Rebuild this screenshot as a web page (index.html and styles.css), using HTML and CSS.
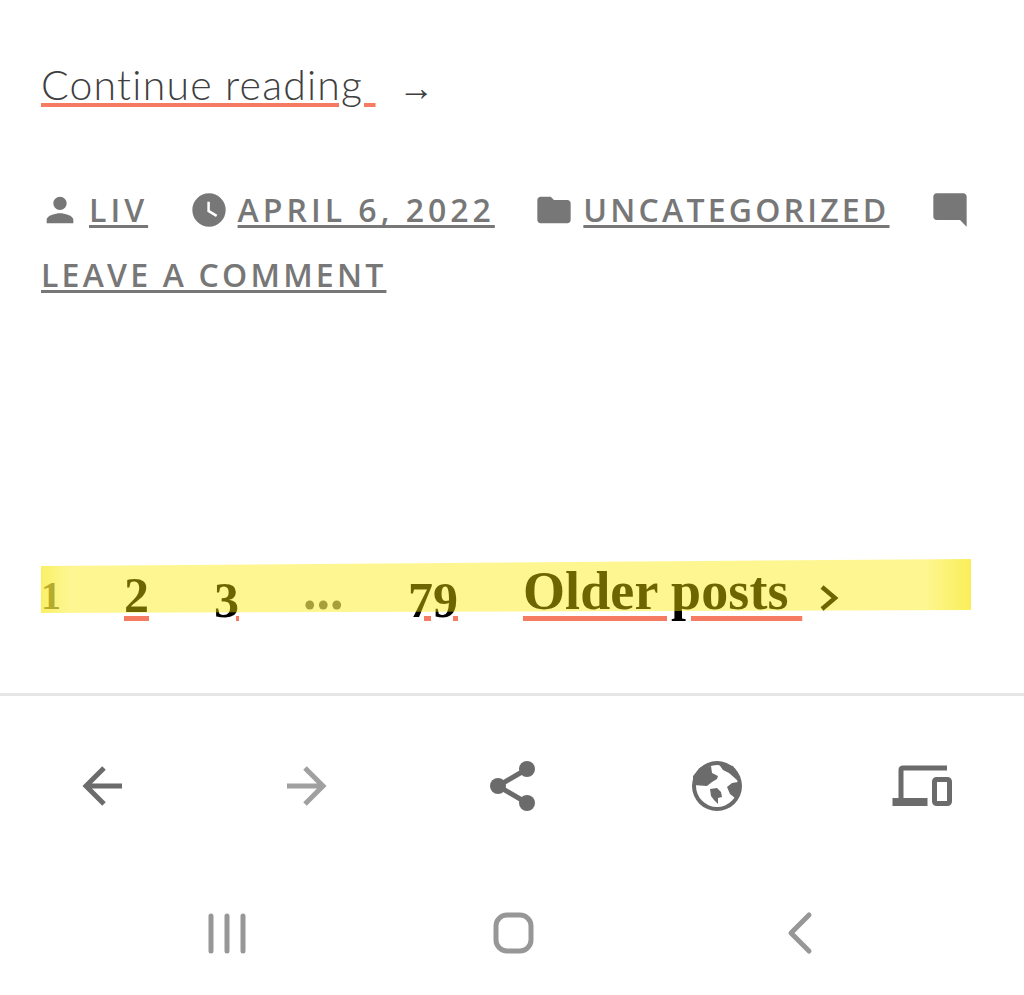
FILE: index.html
```html
<!DOCTYPE html>
<html lang="en">
<head>
<meta charset="utf-8">
<title>Blog footer</title>
<link rel="stylesheet" href="styles.css">
</head>
<body>
<main class="page">
  <p class="more"><a class="more-link" href="#">Continue reading&nbsp;</a><span class="more-arrow">→</span></p>
  <p class="meta">
    <span class="entry entry-author"><svg class="meta-icon" viewBox="0 0 24 24"><path d="M12 12c2.21 0 4-1.79 4-4s-1.79-4-4-4-4 1.79-4 4 1.79 4 4 4zm0 2c-2.67 0-8 1.34-8 4v2h16v-2c0-2.66-5.33-4-8-4z"/></svg><a href="#">Liv</a></span>
    <span class="entry entry-date"><svg class="meta-icon" viewBox="0 0 24 24"><path d="M12 2a10 10 0 1 0 0 20 10 10 0 0 0 0-20zm4.2 14.2L11 13V7h1.5v5.2l4.5 2.7-.8 1.3z"/></svg><a href="#">April 6, 2022</a></span>
    <span class="entry entry-cat"><svg class="meta-icon" viewBox="0 0 24 24"><path d="M10 4H4c-1.1 0-2 .9-2 2v12c0 1.1.9 2 2 2h16c1.1 0 2-.9 2-2V8c0-1.1-.9-2-2-2h-8l-2-2z"/></svg><a href="#">Uncategorized</a></span>
    <svg class="meta-icon" viewBox="0 0 24 24"><path d="M21.99 4c0-1.1-.89-2-1.99-2H4c-1.1 0-2 .9-2 2v12c0 1.1.9 2 2 2h14l4 4-.01-18z"/></svg>
    <a href="#">Leave a comment</a>
  </p>
  <nav class="pager">
    <span class="current">1</span>
    <a class="num-two" href="#">2</a>
    <a class="num-three" href="#">3</a>
    <span class="dots">...</span>
    <a class="num-last" href="#">79</a>
    <a class="older" href="#">Older posts&nbsp;</a>
    <svg class="pager-chevron" viewBox="0 0 24 30"><path d="M4 4l13 11L4 26"/></svg>
    <div class="highlight"></div>
  </nav>
</main>
<div class="browser-bar">
  <span class="tool"><svg class="tool-icon" viewBox="0 0 60 60"><path class="stroke" d="M50 30H13M32 12L14 30l18 18"/></svg></span>
  <span class="tool tool-disabled"><svg class="tool-icon" viewBox="0 0 60 60"><path class="stroke" d="M10 30h37M28 12l18 18-18 18"/></svg></span>
  <span class="tool"><svg class="tool-icon" viewBox="0 0 60 60"><path class="stroke" d="M45 13L16 30l29 17"/><circle cx="45" cy="13" r="8"/><circle cx="16" cy="30" r="8"/><circle cx="45" cy="47" r="8"/></svg></span>
  <span class="tool"><svg class="tool-icon" viewBox="0 0 60 60"><circle cx="30" cy="30" r="25"/><circle class="globe-land" cx="30" cy="30" r="21"/><path d="M6 29l14 1 5-4 5-3 1-3-6-3-1-7-10 1-8 9zM31 7l5 7 6 3 8 7 3-3-7-11zM40 31l5-4 6-1 3 10-6 6-5-4zM23 33l7-1 4 4 1 5-4 1v6l-4-4-3-4z"/></svg></span>
  <span class="tool"><svg class="tool-icon" viewBox="0 0 60 60"><path class="stroke" d="M55 12H11q-2 0-2 2v28"/><path class="solid" d="M.5 42h35v8H.5z"/><rect class="phone" x="42.5" y="23.5" width="15" height="24" rx="2"/></svg></span>
</div>
<div class="system-bar">
  <span class="sys"><svg class="sys-icon" viewBox="0 0 60 60"><path d="M14 13v35M30 13v35M46 13v35"/></svg></span>
  <span class="sys"><svg class="sys-icon" viewBox="0 0 60 60"><rect x="13" y="12" width="35" height="36" rx="11"/></svg></span>
  <span class="sys"><svg class="sys-icon" viewBox="0 0 60 60"><path d="M40 12L22 30l18 18"/></svg></span>
</div>
</body>
</html>
```
FILE: styles.css
```css
* { box-sizing: border-box; }
html, body { margin: 0; padding: 0; }
body {
  width: 1024px;
  height: 995px;
  overflow: hidden;
  background: #fff;
  font-family: "Open Sans", "Liberation Sans", sans-serif;
}
.page { padding: 0 41px; height: 693px; }
.more {
  margin: 0;
  padding-top: 55px;
  height: 177px;
  font-family: Lato, "Open Sans", sans-serif;
  font-weight: 300;
  font-size: 41px;
  line-height: 60px;
  letter-spacing: 1.2px;
  color: #3f3f3f;
}
.more-link {
  color: inherit;
  text-decoration: underline #f57c62 4px;
  text-underline-offset: 3px;
}
.more-arrow { margin-left: 23px; font-size: 36px; letter-spacing: 0; font-family: "Liberation Sans", sans-serif; }
.meta {
  margin: 0;
  font-size: 32px;
  font-weight: 600;
  line-height: 65px;
  letter-spacing: 3.2px;
  text-transform: uppercase;
  color: #777;
}
.meta a { color: inherit; text-decoration: underline 3px; text-underline-offset: 3px; text-decoration-skip-ink: none; }
.entry { margin-right: 29px; }
.entry-author { letter-spacing: 4px; margin-right: 30px; }
.entry-date { letter-spacing: 4px; }
.entry-cat { margin-right: 30px; }
.meta-icon { width: 40px; height: 40px; margin-left: -1px; margin-right: 9px; fill: #777; vertical-align: -8px; }
.pager {
  position: relative;
  display: flex;
  align-items: baseline;
  margin-top: 253px;
  height: 70px;
  font-family: "Liberation Serif", serif;
  font-weight: 700;
  font-size: 54px;
  color: #000;
}
.pager a { color: inherit; text-decoration: underline #f57c62 5px; text-underline-offset: 7px; }
.current { color: #666; font-size: 40px; width: 83px; }
.pager .num-two { width: 25px; font-size: 50px; margin-right: 65px; transform: translateY(3px); text-underline-offset: 4px; }
.pager .num-three { width: 25px; font-size: 50px; margin-right: 65px; transform: translateY(8px); text-underline-offset: -1px; }
.dots { color: #666; width: 105px; margin-left: -1px; font-size: 54px; }
.pager .num-last { width: 50px; font-size: 50px; margin-right: 65px; transform: translateY(8px); text-underline-offset: -1px; }
.older { letter-spacing: .1px; }
.pager-chevron { width: 24px; height: 30px; margin-left: 16px; margin-top: 5px; align-self: center; fill: none; stroke: #000; stroke-width: 4.5; }
.highlight {
  position: absolute;
  left: 0;
  right: 12px;
  top: -1px;
  height: 60px;
  background: linear-gradient(90deg, rgba(246,230,0,.6), rgba(252,235,0,.43) 3%, rgba(252,235,0,.43) 95%, rgba(246,230,0,.65));
  clip-path: polygon(0 7px, 100% 0, 100% 51px, 0 54px);
}
.browser-bar {
  display: grid;
  grid-template-columns: repeat(5, 1fr);
  align-items: center;
  height: 185px;
  border-top: 3px solid #e6e6e6;
  padding-bottom: 2px;
}
.tool { display: flex; justify-content: center; }
.tool-icon { width: 60px; height: 60px; fill: #6b6b6b; overflow: visible; }
.tool-disabled .stroke { stroke: #a0a0a0; }
.stroke { fill: none; stroke: #6b6b6b; stroke-width: 5; }
.phone { fill: none; stroke: #6b6b6b; stroke-width: 5; }
.globe-land { fill: #fff; }
.system-bar { display: flex; justify-content: center; padding-left: 2px; padding-top: 25px; }
.sys { display: flex; justify-content: center; width: 286px; }
.sys-icon { width: 60px; height: 60px; fill: none; stroke: #979797; stroke-width: 5; stroke-linecap: round; stroke-linejoin: round; }
```
